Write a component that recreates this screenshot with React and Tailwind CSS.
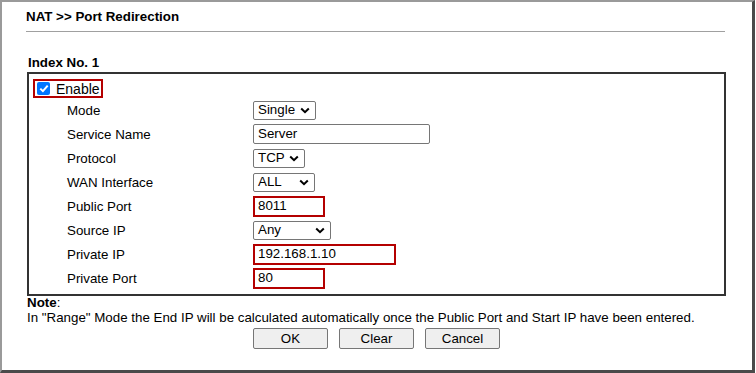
import React from "react";

const font = { fontFamily: '"Liberation Sans", Arial, sans-serif' };

function Chevron() {
  return (
    <svg width="10" height="7" viewBox="0 0 10 7" className="shrink-0">
      <path d="M1.2 1.5 L5 5.2 L8.8 1.5" fill="none" stroke="#000" strokeWidth="2" />
    </svg>
  );
}

function Select({ value, width }) {
  return (
    <div
      className={`flex h-[19px] items-center justify-between rounded-[2px] border border-[#767676] bg-white pl-[4px] pr-[5px] ${width}`}
    >
      <span>{value}</span>
      <Chevron />
    </div>
  );
}

function TextBox({ value, width, red }) {
  if (red) {
    return (
      <div className={`flex h-[21px] items-center border-2 border-[#b40000] bg-white pl-[3px] ${width}`}>
        {value}
      </div>
    );
  }
  return (
    <div className={`flex h-[20px] items-center rounded-[2px] border border-[#767676] bg-white pl-[4px] ${width}`}>
      {value}
    </div>
  );
}

function Row({ label, children }) {
  return (
    <div className="grid h-6 grid-cols-[224px_1fr] items-center">
      <div className="pl-[38px] pt-px">{label}</div>
      <div className="flex items-center">{children}</div>
    </div>
  );
}

export default function App() {
  return (
    <div className="h-[373px] w-[756px] bg-white text-[13.33px] text-black" style={font}>
      <div className="h-[373px] w-[755px] border-b-[3px] border-l-2 border-r-[3px] border-t-2 border-b-[#4a4a4a] border-l-[#9a9a9a] border-r-[#4a4a4a] border-t-[#9a9a9a] pl-6 pt-[7px]">
        <h1 className="text-[13.33px] font-bold leading-[15px]">NAT &gt;&gt; Port Redirection</h1>
        <div className="mt-[7px] h-px w-[699px] bg-[#a0a0a0]" />

        <div className="ml-[2px] mt-[23px] font-bold leading-[15px]">Index No. 1</div>

        <div className="ml-px mt-[2px] w-[699px] border-2 border-[#333] pb-[4px] pt-[5px]">
          <div className="ml-[4px] flex h-[19px] w-[70px] items-center border-2 border-[#b40000] pl-[2px]">
            <span className="flex h-[13px] w-[13px] items-center justify-center rounded-[2px] bg-[#0075ff]">
              <svg width="10" height="9" viewBox="0 0 10 9">
                <path d="M1.3 4.6 L3.9 7.1 L8.7 1.6" fill="none" stroke="#fff" strokeWidth="2" />
              </svg>
            </span>
            <span className="ml-[6px] pt-px text-[14px] leading-none">Enable</span>
          </div>

          <Row label="Mode">
            <Select value="Single" width="w-[63px]" />
          </Row>
          <Row label="Service Name">
            <TextBox value="Server" width="w-[177px]" />
          </Row>
          <Row label="Protocol">
            <Select value="TCP" width="w-[52px]" />
          </Row>
          <Row label="WAN Interface">
            <Select value="ALL" width="w-[62px]" />
          </Row>
          <Row label="Public Port">
            <TextBox value="8011" width="w-[72px]" red />
          </Row>
          <Row label="Source IP">
            <Select value="Any" width="w-[78px]" />
          </Row>
          <Row label="Private IP">
            <TextBox value="192.168.1.10" width="w-[143px]" red />
          </Row>
          <Row label="Private Port">
            <TextBox value="80" width="w-[72px]" red />
          </Row>
        </div>

        <div className="ml-px w-[699px]">
          <p className="leading-[14px]">
            <span className="font-bold">Note</span>:
          </p>
          <p className="leading-[15px]">
            In "Range" Mode the End IP will be calculated automatically once the Public Port and Start IP have been entered.
          </p>
          <div className="mt-[3px] flex justify-center gap-[11px]">
            {["OK", "Clear", "Cancel"].map((b) => (
              <button
                key={b}
                type="button"
                className="h-[21px] w-[75px] rounded-[2px] border border-[#767676] bg-[#efefef] text-[13.33px] leading-none"
              >
                {b}
              </button>
            ))}
          </div>
        </div>
      </div>
    </div>
  );
}
